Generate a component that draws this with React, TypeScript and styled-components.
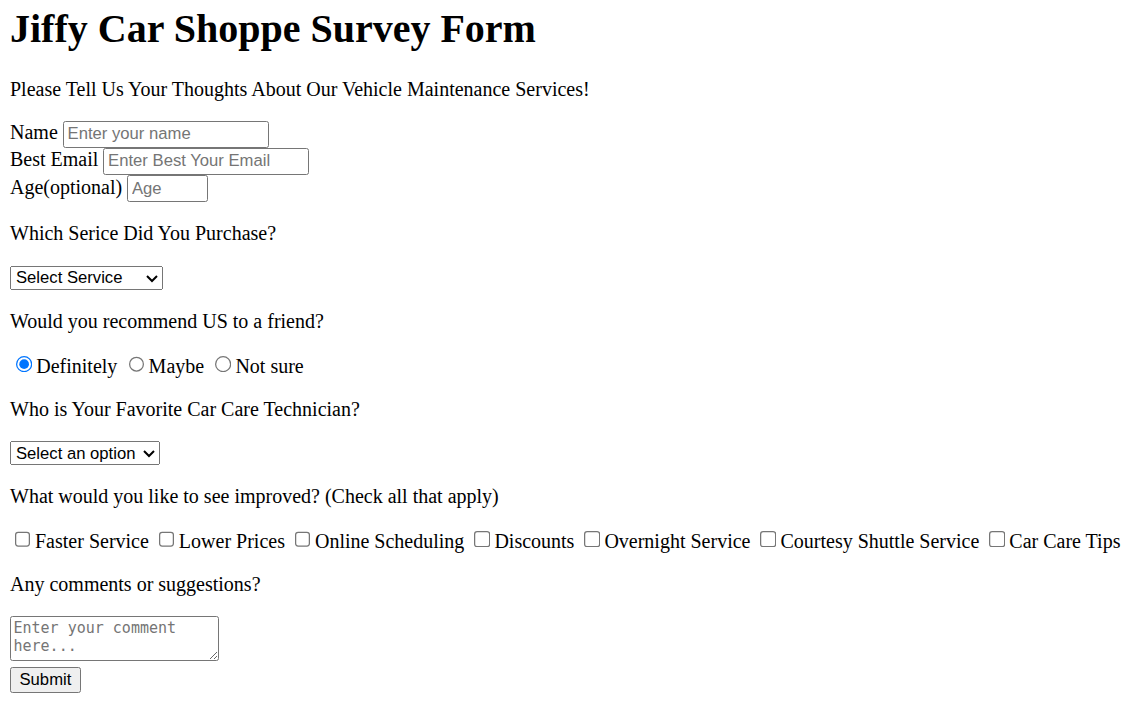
import React from 'react';
import styled, { createGlobalStyle } from 'styled-components';

const GlobalStyle = createGlobalStyle`
    html, body {
        margin: 0;
        background: #fff;
    }
    body {
        font-family: "Liberation Serif", "Times New Roman", serif;
        font-size: 16px;
        color: #000;
    }
`

// the reference was taken at 125% scaling, so the whole page is zoomed
const Page = styled.div`
    zoom: 1.25;
    padding: 3.6px 8px 8px;
`

const Title = styled.h1`
    font-size: 32px;
    font-weight: bold;
    margin: 0 0 21.44px;
`

const Text = styled.p`
    margin: 16px 0;
`

const Fields = styled.div`
    margin-bottom: 0.6px;
`

const ChoiceRow = styled.p`
    margin: 16px 0;
    white-space: nowrap;
`

const Field = styled.label`
    display: inline;
`

const TextInput = styled.input<{ $width: number }>`
    box-sizing: border-box;
    width: ${p => p.$width}px;
    height: 21px;
    margin: 0 0 0.65px;
    font-family: "Liberation Sans", Arial, sans-serif;
    font-size: 13.333px;
    padding: 1px 2px 1px 3px;
    border: 1px solid #767676;
    border-radius: 2px;
    &::placeholder {
        color: #757575;
    }
`

const Select = styled.select<{ $width: number }>`
    width: ${p => p.$width}px;
    height: 18.6px;
    font-family: "Liberation Sans", Arial, sans-serif;
    font-size: 13.333px;
    color: #000;
`

const Radio = styled.input`
    margin: 3px 3px 0 5px;
`

const Checkbox = styled.input`
    margin: 3px 3px 3px 4px;
`

const Comment = styled.textarea`
    box-sizing: border-box;
    display: block;
    width: 167px;
    height: 36.4px;
    margin: 16px 0 4.4px;
    font-family: "DejaVu Sans Mono", "Liberation Mono", monospace;
    font-size: 12px;
    padding: 2px;
    border: 1px solid #767676;
    border-radius: 2px;
    &::placeholder {
        color: #757575;
    }
`

const SubmitButton = styled.button`
    font-family: "Liberation Sans", Arial, sans-serif;
    font-size: 13.333px;
`

const services = ['Oil Change', 'Tire Rotation', 'Brake Inspection', 'Full Detailing']
const technicians = ['Mike', 'Sarah', 'Tony', 'Linda']
const recommend = ['Definitely', 'Maybe', 'Not sure']
const improvements = [
    'Faster Service',
    'Lower Prices',
    'Online Scheduling',
    'Discounts',
    'Overnight Service',
    'Courtesy Shuttle Service',
    'Car Care Tips',
]

export default function App() {
    return (
        <>
            <GlobalStyle />
            <Page>
                <Title>Jiffy Car Shoppe Survey Form</Title>
                <Text>Please Tell Us Your Thoughts About Our Vehicle Maintenance Services!</Text>
                <form onSubmit={e => e.preventDefault()}>
                    <Fields>
                        <Field>Name <TextInput $width={164.8} type="text" placeholder="Enter your name" /></Field><br />
                        <Field>Best Email <TextInput $width={164.8} type="email" placeholder="Enter Best Your Email" /></Field><br />
                        <Field>Age(optional) <TextInput $width={64.8} type="number" placeholder="Age" /></Field>
                    </Fields>

                    <Text>Which Serice Did You Purchase?</Text>
                    <Text>
                        <Select $width={122.4} defaultValue="">
                            <option value="" disabled>Select Service</option>
                            {services.map(s => <option key={s}>{s}</option>)}
                        </Select>
                    </Text>

                    <Text>Would you recommend US to a friend?</Text>
                    <ChoiceRow>
                        {recommend.map((r, i) => (
                            <React.Fragment key={r}>
                                <label><Radio type="radio" name="recommend" defaultChecked={i === 0} />{r}</label>{' '}
                            </React.Fragment>
                        ))}
                    </ChoiceRow>

                    <Text>Who is Your Favorite Car Care Technician?</Text>
                    <Text>
                        <Select $width={120} defaultValue="">
                            <option value="" disabled>Select an option</option>
                            {technicians.map(t => <option key={t}>{t}</option>)}
                        </Select>
                    </Text>

                    <Text>What would you like to see improved? (Check all that apply)</Text>
                    <ChoiceRow>
                        {improvements.map(item => (
                            <React.Fragment key={item}>
                                <label><Checkbox type="checkbox" />{item}</label>{' '}
                            </React.Fragment>
                        ))}
                    </ChoiceRow>

                    <Text>Any comments or suggestions?</Text>
                    <Comment placeholder="Enter your comment here..." />
                    <SubmitButton type="submit">Submit</SubmitButton>
                </form>
            </Page>
        </>
    )
}
